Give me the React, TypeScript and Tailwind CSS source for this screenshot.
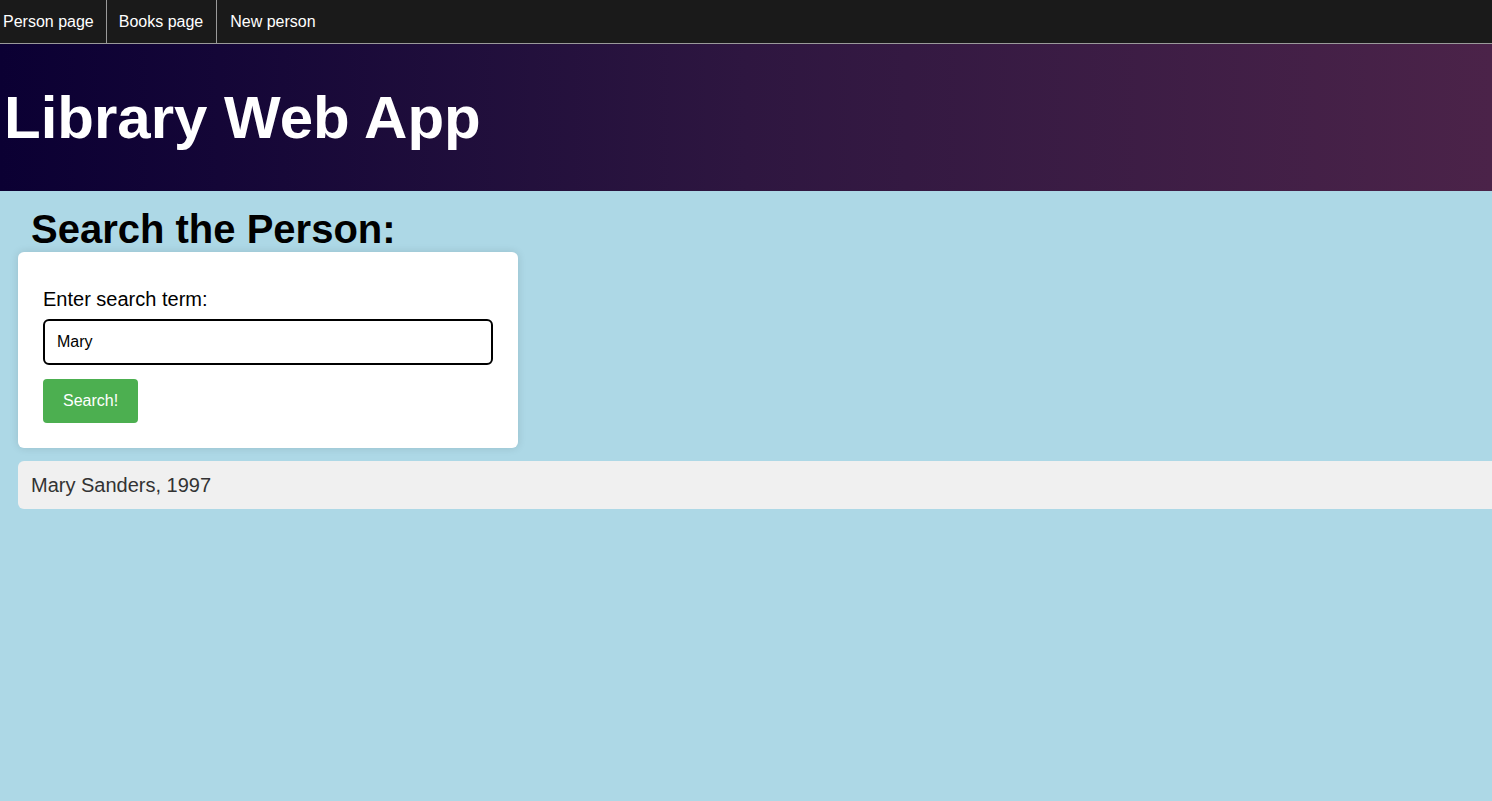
export default function App() {
  const links = ['Person page', 'Books page', 'New person']
  const pads = ['pl-[3px] pr-[12px]', 'pl-[12px] pr-[13px]', 'pl-[13px] pr-[13px]']

  return (
    <div className="min-h-[801px] bg-[#add8e6] font-['Liberation_Sans',Arial,sans-serif] overflow-hidden">
      <nav className="flex h-[44px] bg-[#1a1a1a] border-b border-[#9a9a9a]">
        {links.map((l, i) => (
          <a
            key={l}
            href="#"
            className={`flex items-center text-[16px] text-white border-r border-[#9a9a9a] last:border-r-0 ${pads[i]}`}
          >
            {l}
          </a>
        ))}
      </nav>

      <header className="h-[147px] flex items-center bg-gradient-to-r from-[#0b0033] via-[#2e1640] to-[#4b2349]">
        <h1 className="pl-[4px] text-[60px] font-bold text-white leading-none">Library Web App</h1>
      </header>

      <main className="pl-[18px]">
        <h2 className="pl-[13px] pt-[16px] text-[40px] font-bold text-black leading-[45px]">
          Search the Person:
        </h2>
        <div className="w-[500px] bg-white rounded-[6px] shadow-[0_0_8px_rgba(0,0,0,0.12)] px-[25px] pt-[36px] pb-[25px]">
          <label className="block text-[20px] text-black leading-[23px]">Enter search term:</label>
          <input
            defaultValue="Mary"
            className="mt-[8px] w-full h-[46px] border-2 border-black rounded-[6px] px-[12px] text-[16px] text-black outline-none"
          />
          <button className="mt-[14px] h-[44px] px-[20px] bg-[#4caf50] text-white text-[16px] rounded-[4px]">
            Search!
          </button>
        </div>
        <div className="mt-[13px] h-[48px] w-[1490px] bg-[#f0f0f0] rounded-[6px] flex items-center pl-[13px] text-[20px] text-[#333]">
          Mary Sanders, 1997
        </div>
      </main>
    </div>
  )
}
